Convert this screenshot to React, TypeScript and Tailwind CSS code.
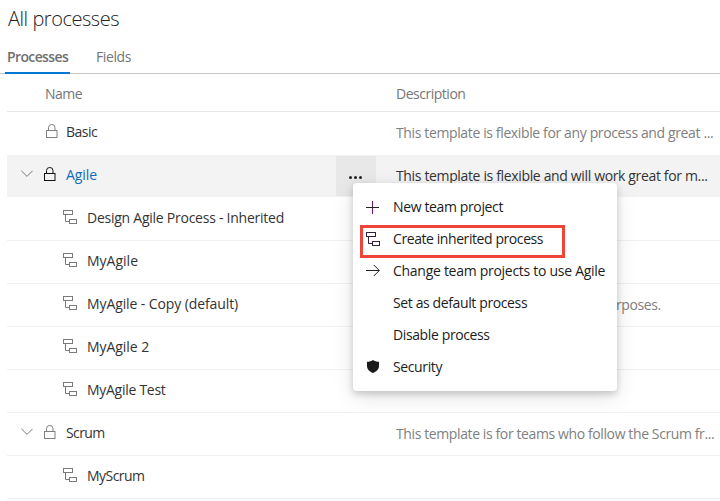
import type { ReactNode } from "react";

function Lock({ className = "" }: { className?: string }) {
  return (
    <svg className={className} width="12" height="15" viewBox="0 0 12 15" fill="none" stroke="currentColor" strokeWidth="1">
      <rect x="0.5" y="6.5" width="10.5" height="7" />
      <path d="M2.500 6.500V3.700a3.250 3.250 0 0 1 6.500 0v2.800" />
    </svg>
  );
}

function Inherit({ className = "" }: { className?: string }) {
  return (
    <svg className={className} width="15" height="15" viewBox="0 0 15 15" fill="none" stroke="currentColor" strokeWidth="1">
      <rect x="0.5" y="0.5" width="9" height="4" />
      <path d="M2.5 4.5v7h4" />
      <rect x="6.5" y="9.5" width="7" height="4" />
    </svg>
  );
}

function Chevron() {
  return (
    <svg className="ml-[2px]" width="12" height="8" viewBox="0 0 12 8" fill="none" stroke="#777777" strokeWidth="1">
      <path d="M0.4 0.8 6 6.4l5.6-5.6" />
    </svg>
  );
}

type Row = {
  name: string;
  kind: "root" | "system" | "child";
  tracking: string;
  desc?: ReactNode;
  active?: boolean;
};

const rows: Row[] = [
  {
    name: "Basic",
    kind: "root",
    tracking: "tracking-[-0.5px]",
    desc: <span className="tracking-[-0.37px]">This template is flexible for any process and great ...</span>,
  },
  {
    name: "Agile",
    kind: "system",
    active: true,
    tracking: "tracking-[-0.08px]",
    desc: <span className="tracking-[-0.35px]">This template is flexible and will work great for m...</span>,
  },
  { name: "Design Agile Process - Inherited", kind: "child", tracking: "tracking-[-0.25px]" },
  { name: "MyAgile", kind: "child", tracking: "tracking-[0px]" },
  {
    name: "MyAgile - Copy (default)",
    kind: "child",
    tracking: "tracking-[-0.1px]",
    desc: <span className="ml-[220px] tracking-[-0.4px]">rposes.</span>,
  },
  { name: "MyAgile 2", kind: "child", tracking: "tracking-[-0.06px]" },
  { name: "MyAgile Test", kind: "child", tracking: "tracking-[-0.28px]" },
  {
    name: "Scrum",
    kind: "system",
    tracking: "tracking-[-0.6px]",
    desc: <span className="tracking-[-0.39px]">This template is for teams who follow the Scrum fr...</span>,
  },
  { name: "MyScrum", kind: "child", tracking: "tracking-[-0.54px]" },
];

function ProcessRow({ row }: { row: Row }) {
  const bg = row.active ? "bg-[#f3f3f3] border-white" : row.kind === "root" ? "border-white" : "border-[#f1f1f1]";
  return (
    <div className={`flex h-[43px] shrink-0 border-b ${bg}`}>
      <div className="flex w-[329px] items-center">
        <span className="flex w-[37px] justify-center pb-[5px]">{row.kind === "system" && <Chevron />}</span>
        {row.kind === "child" ? (
          <>
            <Inherit className="mb-[3px] ml-[19px] text-[#7a7a7a]" />
            <span className={`mb-[2px] ml-[9px] text-[#333333] ${row.tracking}`}>{row.name}</span>
          </>
        ) : (
          <>
            <Lock
              className={`mb-[3px] shrink-0 ${row.kind === "root" ? "ml-[2px] mr-[8px]" : "mr-[10px]"} ${
                row.active ? "text-[#111111]" : "text-[#808080]"
              }`}
            />
            <span className={`mb-[2px] ${row.active ? "text-[#0f6cbd]" : "text-[#333333]"} ${row.tracking}`}>{row.name}</span>
          </>
        )}
      </div>
      <div className="w-[60px]">
        {row.active && (
          <div className="mt-px flex h-[40px] w-[40px] items-center justify-center gap-[2px] bg-[#e8e8e8] pr-px pt-[3px]">
            <i className="size-[3px] rounded-full bg-[#222222]" />
            <i className="size-[3px] rounded-full bg-[#222222]" />
            <i className="size-[3px] rounded-full bg-[#222222]" />
          </div>
        )}
      </div>
      <div className={`flex flex-1 items-center whitespace-nowrap ${row.active ? "text-[#333333]" : "text-[#808080]"}`}>
        {row.desc}
      </div>
    </div>
  );
}

function MenuItem({ icon, tracking, children }: { icon?: ReactNode; tracking: string; children: string }) {
  return (
    <div className="flex h-[32px] items-center">
      <span className="flex w-[40px] pl-[12px]">{icon}</span>
      <span className={`whitespace-nowrap text-[#1c1c1c] ${tracking}`}>{children}</span>
    </div>
  );
}

const line = { fill: "none", stroke: "currentColor", strokeWidth: 1 };

function ContextMenu() {
  return (
    <div className="absolute left-[353px] top-[183px] h-[208px] w-[264px] rounded-[4px] bg-white pt-[8px] shadow-[0_3px_7px_rgba(0,0,0,0.18),0_6px_22px_rgba(0,0,0,0.11)]">
      <MenuItem
        tracking="tracking-[-0.37px]"
        icon={
          <svg className="ml-px mt-px" width="13" height="13" viewBox="0 0 13 13" {...line}>
            <path d="M6.5 0v13" stroke="#751078" />
            <path d="M0 6.5h13" stroke="#222222" />
          </svg>
        }
      >
        New team project
      </MenuItem>
      <MenuItem tracking="tracking-[-0.42px]" icon={<Inherit className="ml-px mt-px text-[#33203a]" />}>
        Create inherited process
      </MenuItem>
      <MenuItem
        tracking="tracking-[-0.28px]"
        icon={
          <svg className="mb-px ml-px text-[#222222]" width="14" height="13" viewBox="0 0 14 13" {...line}>
            <path d="M0 6.5h13.3M7.8 1l5.5 5.5L7.8 12" />
          </svg>
        }
      >
        Change team projects to use Agile
      </MenuItem>
      <MenuItem tracking="tracking-[-0.38px]">Set as default process</MenuItem>
      <MenuItem tracking="tracking-[-0.38px]">Disable process</MenuItem>
      <MenuItem
        tracking="tracking-[-0.38px]"
        icon={
          <svg className="mb-px ml-[2px]" width="12" height="13" viewBox="0 0 12 13" fill="#1b1b1b">
            <path d="M6 0c1.6 1.2 3.6 1.7 6 1.8V6c0 3.200-2.600 5.600-6 7-3.400-1.400-6-3.800-6-7V1.800C2.400 1.700 4.400 1.200 6 0Z" />
          </svg>
        }
      >
        Security
      </MenuItem>
      <div className="absolute left-[7px] top-[42px] h-[33px] w-[205px] border-[3px] border-[#f04438]" />
    </div>
  );
}

export default function App() {
  return (
    <div className="relative flex h-[501px] w-[720px] flex-col overflow-hidden bg-white font-['Open_Sans','Noto_Sans',sans-serif] text-[14px] leading-[20px]">
      <h1 className="h-[42px] pl-[8px] pt-[5px] text-[20px] font-light leading-[28px] tracking-[-0.46px] text-[#222222]">
        All processes
      </h1>
      <nav className="flex h-[32px] border-b border-[#c8c8c8] pl-[5px]">
        <div className="-mb-px h-[32px] w-[65px] border-b-2 border-[#0078d4] pl-[2px] pt-[5px] font-semibold tracking-[-0.62px] text-[#707070]">
          Processes
        </div>
        <div className="pl-[26px] pt-[5px] tracking-[-0.4px] text-[#767676]">Fields</div>
      </nav>
      <div className="ml-[7px] flex h-[38px] shrink-0 items-center border-b border-[#e6e6e6] pt-[3px] text-[#767676]">
        <span className="w-[389px] pl-[38px] tracking-[-0.52px]">Name</span>
        <span className="tracking-[-0.48px]">Description</span>
      </div>
      <div className="ml-[7px] flex flex-col">
        {rows.map((r) => (
          <ProcessRow key={r.name} row={r} />
        ))}
      </div>
      <ContextMenu />
    </div>
  );
}
